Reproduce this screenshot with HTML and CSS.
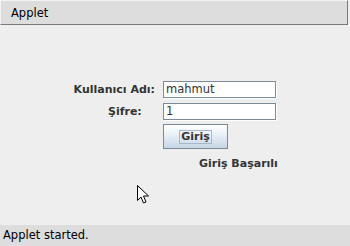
FILE: index.html
```html
<!DOCTYPE html>
<html>
<head>
<meta charset="utf-8">
<link rel="stylesheet" href="styles.css">
</head>
<body>
<div class="window">
  <div class="titlebar"><span class="title">Applet</span></div>
  <div class="main">
    <div class="form">
      <label class="lbl lbl-user">Kullanıcı Adı:</label>
      <div class="field">mahmut</div>
      <label class="lbl lbl-pass">Şifre:</label>
      <div class="field">1</div>
      <div class="spacer"></div>
      <div class="btn"><span class="focus">Giriş</span></div>
      <div class="spacer"></div>
      <div class="msg">Giriş Başarılı</div>
    </div>
    <svg class="cursor" width="13" height="20" viewBox="0 0 13 20">
      <path d="M0.5 0.5 L0.5 15.5 L4 12 L6.5 18 L9 17 L6.5 11 L11.5 11 Z" fill="#fff" stroke="#000" stroke-width="1" stroke-linejoin="miter"/>
    </svg>
  </div>
  <div class="status">Applet started.</div>
</div>
</body>
</html>
```
FILE: styles.css
```css
html, body {
  margin: 0;
  padding: 0;
  background: #eeeeee;
}
.window {
  width: 350px;
  height: 246px;
  display: flex;
  flex-direction: column;
  font-family: "DejaVu Sans", sans-serif;
  overflow: hidden;
}
.titlebar {
  width: 348px;
  background: #dddddd;
  border-top: 1px solid #f4f4f4;
  border-left: 1px solid #f4f4f4;
  border-right: 1px solid #7a7a7a;
  border-bottom: 1px solid #7a7a7a;
  box-sizing: border-box;
  height: 25px;
  display: flex;
  align-items: center;
  padding-left: 10px;
  font-size: 11.5px;
  color: #000;
}
.main {
  flex: 1;
  position: relative;
}
.form {
  display: grid;
  grid-template-columns: 163px 115px;
  padding-top: 56px;
}
.lbl {
  font-weight: bold;
  font-size: 11px;
  color: #333333;
  height: 22px;
  line-height: 17px;
}
.lbl-user {
  text-align: right;
  padding-right: 8px;
}
.lbl-pass {
  padding-left: 108px;
}
.field {
  box-sizing: border-box;
  width: 113px;
  height: 17px;
  border: 1px solid #7a8a99;
  box-shadow: 1px 1px 0 #ffffff;
  background: #ffffff;
  font-size: 11.5px;
  line-height: 15px;
  padding-left: 2px;
  color: #333333;
}
.btn {
  box-sizing: border-box;
  width: 65px;
  height: 25px;
  margin-top: -1px;
  border: 1px solid #7a8a99;
  background: linear-gradient(to bottom, #ffffff 0%, #eef3f8 35%, #d8e3ee 70%, #c6d6e6 100%);
  display: flex;
  align-items: center;
  justify-content: center;
}
.focus {
  border: 1px solid #a3b8cc;
  font-weight: bold;
  font-size: 11px;
  color: #333333;
  padding: 0 1px;
  line-height: 12px;
}
.msg {
  margin-top: 8px;
  padding-left: 36px;
  font-weight: bold;
  font-size: 11px;
  color: #333333;
  white-space: nowrap;
}
.cursor {
  position: absolute;
  left: 137px;
  top: 160px;
}
.status {
  height: 21px;
  background: #dddddd;
  font-size: 11.5px;
  color: #000;
  padding-left: 3px;
  line-height: 21px;
}
```
